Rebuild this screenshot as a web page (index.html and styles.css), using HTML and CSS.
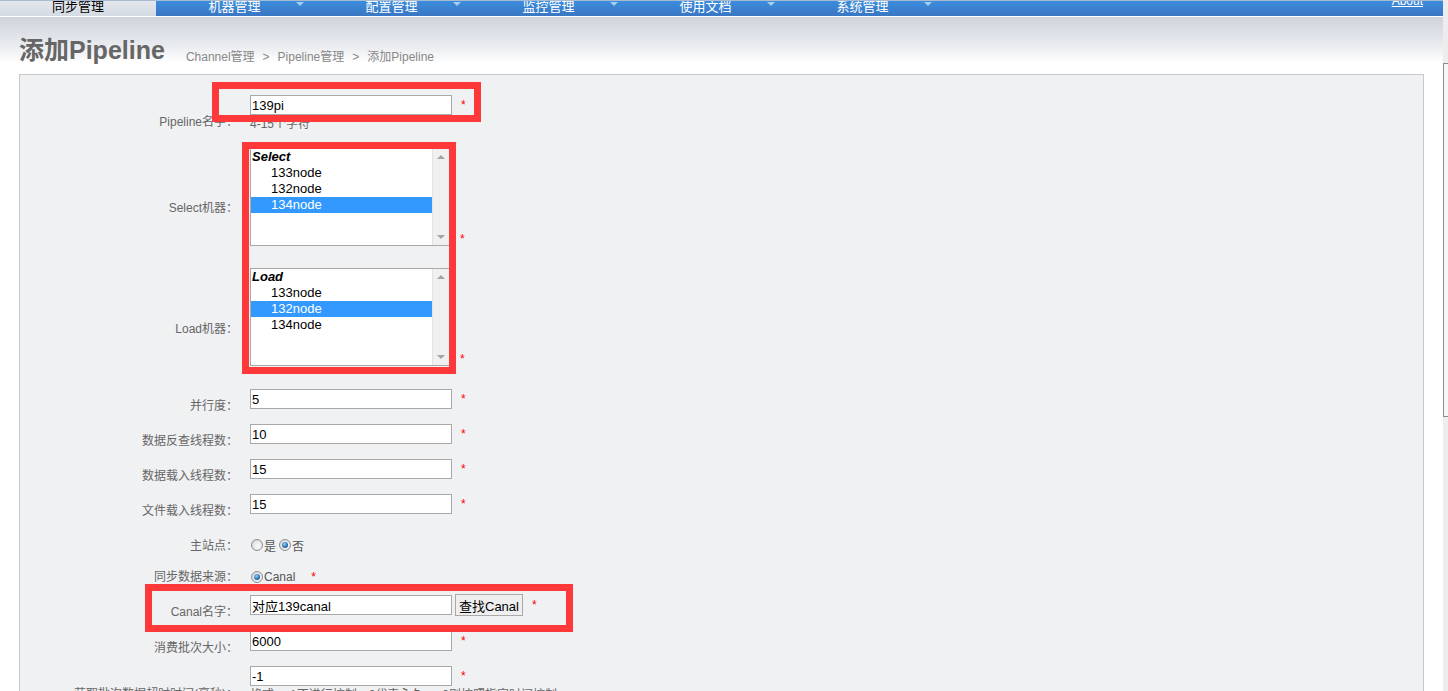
FILE: index.html
```html
<!DOCTYPE html>
<html lang="zh-cn">
<head>
  <meta charset="UTF-8">
  <meta name="viewport" content="width=device-width, initial-scale=1.0">
  <title>添加Pipeline</title>
  <link rel="stylesheet" href="styles.css">
</head>
<body>

  <div class="page">

    <!-- 顶部菜单 -->
    <div class="nav">
      <div class="tab tab-active">同步管理</div>
      <div class="tab">机器管理<span class="tab-arrow"></span></div>
      <div class="tab">配置管理<span class="tab-arrow"></span></div>
      <div class="tab">监控管理<span class="tab-arrow"></span></div>
      <div class="tab">使用文档<span class="tab-arrow"></span></div>
      <div class="tab">系统管理<span class="tab-arrow"></span></div>
      <a class="about" href="#">About</a>
    </div>

    <!-- 标题 -->
    <div class="header">
      <h1 class="page-title">添加Pipeline</h1>
      <div class="crumbs">Channel管理<span class="sep">&gt;</span>Pipeline管理<span class="sep">&gt;</span>添加Pipeline</div>
    </div>

    <!-- 表单 -->
    <div class="form-box">

      <div class="row row-name">
        <div class="row-label">Pipeline名字：</div>
        <div class="row-field">
          <div class="field-line">
            <input class="text-input" type="text" value="139pi">
            <span class="req">*</span>
          </div>
          <div class="hint">4-15个字符</div>
        </div>
      </div>

      <div class="row row-select">
        <div class="row-label">Select机器：</div>
        <div class="row-field field-bottom">
          <div class="listbox">
            <div class="listbox-items">
              <div class="opt-group">Select</div>
              <div class="opt">133node</div>
              <div class="opt">132node</div>
              <div class="opt opt-selected">134node</div>
            </div>
            <div class="listbox-scroll"><span class="arrow-up"></span><span class="arrow-down"></span></div>
          </div>
          <span class="req req-low">*</span>
        </div>
      </div>

      <div class="row row-load">
        <div class="row-label">Load机器：</div>
        <div class="row-field field-bottom">
          <div class="listbox">
            <div class="listbox-items">
              <div class="opt-group">Load</div>
              <div class="opt">133node</div>
              <div class="opt opt-selected">132node</div>
              <div class="opt">134node</div>
            </div>
            <div class="listbox-scroll"><span class="arrow-up"></span><span class="arrow-down"></span></div>
          </div>
          <span class="req req-low">*</span>
        </div>
      </div>

      <div class="row row-num row-first-num">
        <div class="row-label">并行度：</div>
        <div class="row-field field-line">
          <input class="text-input" type="text" value="5">
          <span class="req">*</span>
        </div>
      </div>

      <div class="row row-num">
        <div class="row-label">数据反查线程数：</div>
        <div class="row-field field-line">
          <input class="text-input" type="text" value="10">
          <span class="req">*</span>
        </div>
      </div>

      <div class="row row-num">
        <div class="row-label">数据载入线程数：</div>
        <div class="row-field field-line">
          <input class="text-input" type="text" value="15">
          <span class="req">*</span>
        </div>
      </div>

      <div class="row row-num">
        <div class="row-label">文件载入线程数：</div>
        <div class="row-field field-line">
          <input class="text-input" type="text" value="15">
          <span class="req">*</span>
        </div>
      </div>

      <div class="row row-master">
        <div class="row-label">主站点：</div>
        <div class="row-field radio-line">
          <span class="radio"></span><span class="radio-text">是</span>
          <span class="radio radio-on"></span><span class="radio-text">否</span>
        </div>
      </div>

      <div class="row row-source">
        <div class="row-label">同步数据来源：</div>
        <div class="row-field radio-line">
          <span class="radio radio-on"></span><span class="radio-text">Canal</span>
          <span class="req req-source">*</span>
        </div>
      </div>

      <div class="row row-canal">
        <div class="row-label">Canal名字：</div>
        <div class="row-field field-center">
          <input class="text-input" type="text" value="对应139canal">
          <button class="btn" type="button">查找Canal</button>
          <span class="req req-canal">*</span>
        </div>
      </div>

      <div class="row row-num row-batch">
        <div class="row-label">消费批次大小：</div>
        <div class="row-field field-line">
          <input class="text-input" type="text" value="6000">
          <span class="req">*</span>
        </div>
      </div>

      <div class="row row-timeout">
        <div class="row-label">获取批次数据超时时间(毫秒)：</div>
        <div class="row-field">
          <div class="field-line">
            <input class="text-input" type="text" value="-1">
            <span class="req">*</span>
          </div>
          <div class="hint">格式：-1不进行控制，0代表永久，&gt;0则按照指定时间控制</div>
        </div>
      </div>

    </div>

    <!-- 标注框 -->
    <div class="mark mark-name"></div>
    <div class="mark mark-nodes"></div>
    <div class="mark mark-canal"></div>
  </div>

  <div class="scrollbar"><div class="scrollbar-thumb"></div></div>

</body>
</html>
```

FILE: styles.css
```css
body {
  margin: 0;
  padding: 0;
  font-family: "Liberation Sans", "Noto Sans CJK SC", sans-serif;
  font-size: 12px;
  color: #666;
  background-color: #fff;
  overflow: hidden;
}

.page {
  position: relative;
  width: 1443px;
}

/* 菜单 */
.nav {
  display: flex;
  height: 15px;
  border-top: 1px solid #a9bad3;
  border-bottom: 1px solid #fff;
  background: linear-gradient(#3b8ddc, #3a76c3);
  overflow: hidden;
}

.tab {
  position: relative;
  width: 157px;
  flex-shrink: 0;
  text-align: center;
  font-size: 13px;
  line-height: 11px;
  color: #fff;
}

.tab-active {
  width: 156px;
  height: 17px;
  color: #000;
  background: linear-gradient(#e3e7ed, #d3d9e1);
}

.tab-arrow {
  position: absolute;
  right: 9px;
  top: 1px;
  width: 0;
  height: 0;
  border-left: 4px solid transparent;
  border-right: 4px solid transparent;
  border-top: 4px solid #a4cdf3;
}

.about {
  margin-left: auto;
  margin-right: 20px;
  margin-top: -7px;
  font-size: 12px;
  line-height: 14px;
  color: #fff;
  text-decoration: underline;
}

/* 标题 */
.header {
  display: flex;
  align-items: baseline;
  height: 57px;
  box-sizing: border-box;
  padding: 19px 0 0 19px;
  background: linear-gradient(#ced3db, #eceef1 55%, #fff 80%);
}

.page-title {
  margin: 0;
  font-size: 25px;
  line-height: 29px;
  font-weight: bold;
  color: #666;
}

.crumbs {
  margin-left: 21px;
  font-size: 12px;
  color: #888;
  position: relative;
  top: 2px;
}

.crumbs .sep {
  margin: 0 8px;
}

/* 表单 */
.form-box {
  margin: 0 19px;
  padding: 20px 0 60px;
  border: 1px solid #c9c9c9;
  background-color: #f0f1f3;
}

.row {
  display: flex;
  align-items: flex-start;
}

.row-label {
  width: 218px;
  flex-shrink: 0;
  text-align: right;
  line-height: 16px;
  color: #666;
}

.row-field {
  margin-left: 12px;
}

.field-line {
  display: flex;
  align-items: flex-start;
}

.field-bottom {
  display: flex;
  align-items: flex-end;
}

.field-center {
  display: flex;
  align-items: center;
}

.text-input {
  width: 202px;
  height: 20px;
  box-sizing: border-box;
  margin: 0;
  padding: 0 0 0 1px;
  border: 1px solid #a9a9a9;
  background-color: #fff;
  font-family: "Liberation Sans", "Noto Sans CJK SC", sans-serif;
  font-size: 13px;
  color: #000;
  outline: none;
}

.req {
  margin-left: 9px;
  line-height: 20px;
  font-size: 12px;
  color: #f00;
}

.req-low {
  margin-left: 10px;
  line-height: 14px;
}

.req-source {
  margin-left: 14px;
  line-height: 16px;
}

.req-canal {
  margin-left: 9px;
}

.hint {
  margin-top: 1px;
  line-height: 16px;
  color: #666;
}

.btn {
  height: 22px;
  margin: 0 0 0 3px;
  padding: 0 3px;
  border: 1px solid #a9a9a9;
  background-color: #efefef;
  font-family: "Liberation Sans", "Noto Sans CJK SC", sans-serif;
  font-size: 13px;
  color: #000;
}

/* 列表框 */
.listbox {
  display: flex;
  width: 200px;
  height: 98px;
  box-sizing: border-box;
  border: 1px solid #a9a9a9;
  background-color: #fff;
}

.listbox-items {
  flex: 1;
  font-size: 13px;
  line-height: 16px;
  color: #000;
}

.opt-group {
  padding-left: 1px;
  font-weight: bold;
  font-style: italic;
}

.opt {
  padding-left: 20px;
}

.opt-selected {
  background-color: #3399ff;
  color: #fff;
}

.listbox-scroll {
  display: flex;
  flex-direction: column;
  justify-content: space-between;
  align-items: center;
  width: 17px;
  padding: 6px 0;
  box-sizing: border-box;
  border-left: 1px solid #e4e4e4;
  background-color: #f0f0f0;
}

.arrow-up,
.arrow-down {
  width: 0;
  height: 0;
  border-left: 4px solid transparent;
  border-right: 4px solid transparent;
}

.arrow-up {
  border-bottom: 4px solid #a3a3a3;
}

.arrow-down {
  border-top: 4px solid #a3a3a3;
}

/* 单选 */
.radio-line {
  display: flex;
  align-items: center;
  height: 20px;
}

.radio {
  position: relative;
  width: 12px;
  height: 12px;
  box-sizing: border-box;
  margin-left: 1px;
  border: 1px solid #8f8f8f;
  border-radius: 50%;
  background: radial-gradient(circle at 60% 60%, #fdfdfd, #d0d0d0);
}

.radio-on::after {
  content: "";
  position: absolute;
  left: 2px;
  top: 2px;
  width: 6px;
  height: 6px;
  border-radius: 50%;
  background: radial-gradient(circle at 40% 35%, #8fd0ff, #1a5c9c 70%, #0d3a66);
}

.radio-text {
  margin-left: 1px;
  margin-right: 2px;
  font-size: 12px;
  color: #555;
}

/* 行间距 */
.row-name .row-label { padding-top: 19px; }

.row-select { margin-top: 16px; }
.row-select .row-label { padding-top: 52px; }

.row-load { margin-top: 22px; }
.row-load .row-label { padding-top: 53px; }

.row-num { margin-top: 10px; }
.row-first-num { margin-top: 23px; }
.row-num .row-label { padding-top: 9px; }

.row-master { margin-top: 16px; }
.row-master .row-label { padding-top: 3px; }

.row-source { margin-top: 12px; }
.row-source .row-label { padding-top: 2px; }

.row-canal { margin-top: 7px; }
.row-canal .row-label { padding-top: 10px; }

.row-batch { margin-top: 11px; }

.row-timeout { margin-top: 10px; }
.row-timeout .row-label { padding-top: 20px; }

/* 标注 */
.mark {
  position: absolute;
  box-sizing: border-box;
  border: 7px solid #ff3939;
}

.mark-name {
  left: 212px;
  top: 82px;
  width: 269px;
  height: 40px;
}

.mark-nodes {
  left: 242px;
  top: 142px;
  width: 214px;
  height: 232px;
}

.mark-canal {
  left: 145px;
  top: 584px;
  width: 428px;
  height: 48px;
}

/* 滚动条 */
.scrollbar {
  position: fixed;
  top: 0;
  right: 0;
  width: 5px;
  height: 100%;
  background-color: #ededed;
}

.scrollbar-thumb {
  margin-top: 63px;
  height: 354px;
  box-sizing: border-box;
  border: 1px solid #8c8c8c;
  border-right: none;
  background-color: #f7f7f7;
}
```
